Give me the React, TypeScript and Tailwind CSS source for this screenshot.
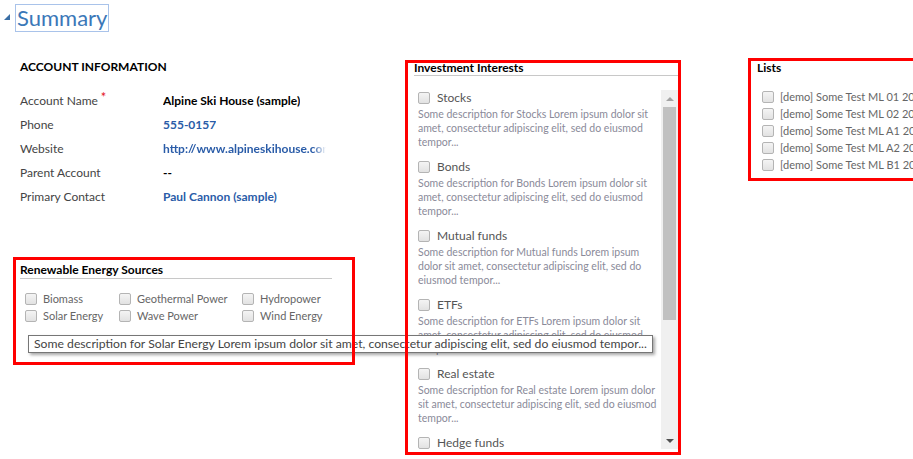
import React from "react";

const font = { fontFamily: "Lato, 'Open Sans', sans-serif" };

const account = [
  { label: "Account Name", value: "Alpine Ski House (sample)", required: true, dark: true },
  { label: "Phone", value: "555-0157" },
  { label: "Website", value: "http://www.alpineskihouse.com", cut: true },
  { label: "Parent Account", value: "--", dark: true },
  { label: "Primary Contact", value: "Paul Cannon (sample)" },
];

const energy = [
  ["Biomass", "Geothermal Power", "Hydropower"],
  ["Solar Energy", "Wave Power", "Wind Energy"],
];

const investments = [
  { name: "Stocks", desc: "Some description for Stocks Lorem ipsum dolor sit amet, consectetur adipiscing elit, sed do eiusmod tempor..." },
  { name: "Bonds", desc: "Some description for Bonds Lorem ipsum dolor sit amet, consectetur adipiscing elit, sed do eiusmod tempor..." },
  { name: "Mutual funds", desc: "Some description for Mutual funds Lorem ipsum dolor sit amet, consectetur adipiscing elit, sed do eiusmod tempor..." },
  { name: "ETFs", desc: "Some description for ETFs Lorem ipsum dolor sit amet, consectetur adipiscing elit, sed do eiusmod tempor..." },
  { name: "Real estate", desc: "Some description for Real estate Lorem ipsum dolor sit amet, consectetur adipiscing elit, sed do eiusmod tempor..." },
  { name: "Hedge funds", desc: "Some description for Hedge funds Lorem ipsum dolor sit amet, consectetur adipiscing elit, sed do eiusmod tempor..." },
];

const lists = ["01", "02", "A1", "A2", "B1"];

const Box = () => (
  <span className="inline-block w-[12px] h-[12px] shrink-0 rounded-[2px] border border-[#b4b4b4] bg-gradient-to-b from-[#f4f4f4] to-[#e2e2e2]" />
);

const Highlight = () => (
  <div className="absolute inset-0 border-[3px] border-[#ff0000] pointer-events-none z-20" />
);

export default function App() {
  return (
    <div className="w-[913px] h-[459px] overflow-hidden bg-white relative" style={font}>
      {/* header */}
      <div className="flex items-center h-[33px] pt-[2px]">
        <span className="ml-[4px] w-0 h-0 border-l-[6px] border-l-transparent border-b-[6px] border-b-[#3a6ea5] -mt-[2px]" />
        <span className="ml-[5px] h-[28px] px-[1px] border border-[#a9c3ea] text-[22px] leading-[26px] text-[#3b78b8]">
          Summary
        </span>
      </div>

      <div className="flex mt-[27px]">
        {/* left column */}
        <div className="w-[392px] shrink-0">
          <div className="pl-[20px]">
            <div className="text-[12px] font-bold text-black leading-[14px]">ACCOUNT INFORMATION</div>
            <div className="mt-[15px] flex flex-col">
              {account.map((r) => (
                <div key={r.label} className="flex h-[24px] items-center text-[12px]">
                  <div className="w-[143px] text-[#444] relative">
                    {r.label}
                    {r.required && <span className="absolute -top-[4px] ml-[3px] text-[#e4141b] text-[13px]">*</span>}
                  </div>
                  <div
                    className={`font-bold whitespace-nowrap overflow-hidden ${r.dark ? "text-black" : "text-[#2a5ca8]"} ${r.cut ? "w-[163px]" : ""}`}
                    style={r.cut ? { WebkitMaskImage: "linear-gradient(to right, black 150px, transparent 163px)" } : undefined}
                  >
                    {r.value}
                  </div>
                </div>
              ))}
            </div>
          </div>

          {/* renewable */}
          <div className="relative ml-[13px] mt-[48px] w-[342px] h-[108px] pt-[5px] pl-[7px]">
            <Highlight />
            <div className="w-[312px] border-b border-[#c8c8c8] text-[12px] font-bold text-black leading-[15px] pb-[1px]">
              Renewable Energy Sources
            </div>
            <div className="mt-[13px] pl-[5px] flex flex-col gap-[3px]">
              {energy.map((row, i) => (
                <div key={i} className="flex h-[14px] items-center text-[11px] text-[#666]">
                  {row.map((n, j) => (
                    <div key={n} className={`flex items-center gap-[6px] ${j === 0 ? "w-[94px]" : j === 1 ? "w-[123px]" : ""}`}>
                      <Box />
                      <span>{n}</span>
                    </div>
                  ))}
                </div>
              ))}
            </div>
            <div className="absolute left-[15px] top-[78px] z-10 h-[18px] px-[5px] flex items-center border border-[#767676] bg-white shadow-[2px_2px_3px_rgba(0,0,0,0.35)] whitespace-nowrap text-[12.2px] text-[#444]">
              Some description for Solar Energy Lorem ipsum dolor sit amet, consectetur adipiscing elit, sed do eiusmod tempor...
            </div>
          </div>
        </div>

        {/* investments */}
        <div className="relative ml-[13px] w-[276px] h-[395px] shrink-0 pt-[2px] pl-[9px] pr-[3px]">
          <Highlight />
          <div className="border-b border-[#c8c8c8] text-[12px] font-bold text-black leading-[12px] pb-[1px]">
            Investment Interests
          </div>
          <div className="flex mt-[14px] h-[359px]">
            <div className="flex-1 overflow-hidden pl-[4px] pr-[4px] flex flex-col gap-[10px]">
              {investments.map((it) => (
                <div key={it.name}>
                  <div className="flex items-center gap-[7px] h-[16px] text-[12px] text-[#555]">
                    <Box />
                    <span>{it.name}</span>
                  </div>
                  <div className="mt-[1px] text-[10.5px] leading-[14px] text-[#8a8a99]">{it.desc}</div>
                </div>
              ))}
            </div>
            <div className="w-[17px] shrink-0 bg-[#f0f0f0] flex flex-col items-center">
              <div className="h-[17px] flex items-center justify-center">
                <span className="w-0 h-0 border-x-[4px] border-x-transparent border-b-[4px] border-b-[#a3a3a3]" />
              </div>
              <div className="w-[13px] h-[213px] bg-[#c1c1c1]" />
              <div className="flex-1" />
              <div className="h-[17px] flex items-center justify-center">
                <span className="w-0 h-0 border-x-[4px] border-x-transparent border-t-[4px] border-t-[#505050]" />
              </div>
            </div>
          </div>
        </div>

        {/* lists */}
        <div className="relative ml-[67px] -mt-[2px] w-[175px] h-[123px] shrink-0 pt-[3px] pl-[9px]">
          <Highlight />
          <div className="text-[12px] font-bold text-black leading-[14px]">Lists</div>
          <div className="mt-[15px] pl-[5px] flex flex-col gap-[3px]">
            {lists.map((l) => (
              <div key={l} className="flex items-center gap-[6px] h-[14px] text-[11px] text-[#666] whitespace-nowrap">
                <Box />
                <span>[demo] Some Test ML {l} 2019</span>
              </div>
            ))}
          </div>
        </div>
      </div>
    </div>
  );
}
